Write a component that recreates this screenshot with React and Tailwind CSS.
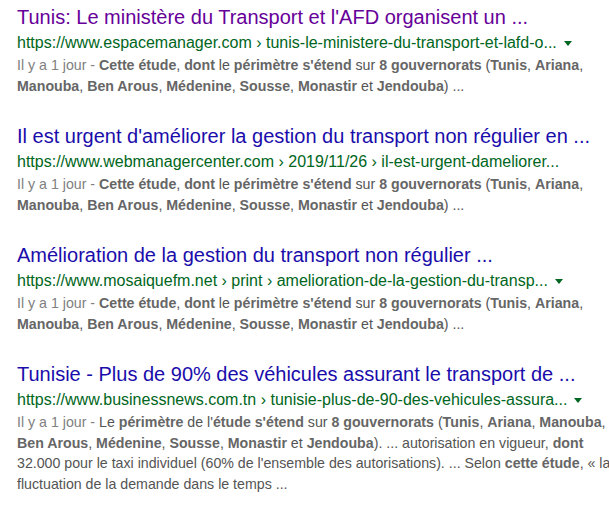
// snippet lines use **...** for the bold (matched) words
const commonSnippet = [
  "**Cette étude**, **dont** le **périmètre s'étend** sur **8 gouvernorats** (**Tunis**, **Ariana**,",
  "**Manouba**, **Ben Arous**, **Médenine**, **Sousse**, **Monastir** et **Jendouba**) ...",
];

const results = [
  {
    title: "Tunis: Le ministère du Transport et l'AFD organisent un ...",
    visited: true,
    url: "https://www.espacemanager.com › tunis-le-ministere-du-transport-et-lafd-o...",
    arrow: true,
    snippet: commonSnippet,
  },
  {
    title: "Il est urgent d'améliorer la gestion du transport non régulier en ...",
    url: "https://www.webmanagercenter.com › 2019/11/26 › il-est-urgent-dameliorer...",
    arrow: false,
    snippet: commonSnippet,
  },
  {
    title: "Amélioration de la gestion du transport non régulier ...",
    url: "https://www.mosaiquefm.net › print › amelioration-de-la-gestion-du-transp...",
    arrow: true,
    snippet: commonSnippet,
  },
  {
    title: "Tunisie - Plus de 90% des véhicules assurant le transport de ...",
    url: "https://www.businessnews.com.tn › tunisie-plus-de-90-des-vehicules-assura...",
    arrow: true,
    snippet: [
      "Le **périmètre** de l'**étude s'étend** sur **8 gouvernorats** (**Tunis**, **Ariana**, **Manouba**,",
      "**Ben Arous**, **Médenine**, **Sousse**, **Monastir** et **Jendouba**). ... autorisation en vigueur, **dont**",
      "32.000 pour le taxi individuel (60% de l'ensemble des autorisations). ... Selon **cette étude**, « la",
      "fluctuation de la demande dans le temps ...",
    ],
  },
];

const Rich = ({ text }) =>
  text.split("**").map((part, i) =>
    i % 2 === 1 ? (
      <b key={i} className="font-bold text-[#666666]">
        {part}
      </b>
    ) : (
      <span key={i}>{part}</span>
    )
  );

const Result = ({ item }) => (
  <div className="mb-[28px]">
    <h3
      className={`text-[20px] leading-[24px] whitespace-nowrap ${
        item.visited ? "text-[#660099]" : "text-[#1a0dab]"
      }`}
    >
      {item.title}
    </h3>
    <div className="mt-[2px] text-[16px] leading-[24px] text-[#006621] whitespace-nowrap">
      {item.url}
      {item.arrow && (
        <span className="ml-[7px] inline-block align-middle w-0 h-0 border-t-[5px] border-x-[4px] border-t-[#006621] border-x-transparent"></span>
      )}
    </div>
    <div className="text-[14.2px] leading-[20.5px] text-[#545454]">
      {item.snippet.map((line, i) => (
        <div key={i} className="whitespace-nowrap">
          {i === 0 && <span className="text-[#808080]">Il y a 1 jour - </span>}
          <Rich text={line} />
        </div>
      ))}
    </div>
  </div>
);

export default function App() {
  return (
    <div
      className="min-h-screen overflow-hidden bg-white pl-[17px] pt-[5px]"
      style={{ fontFamily: '"Liberation Sans", Arial, sans-serif' }}
    >
      {results.map((item, i) => (
        <Result key={i} item={item} />
      ))}
    </div>
  );
}
